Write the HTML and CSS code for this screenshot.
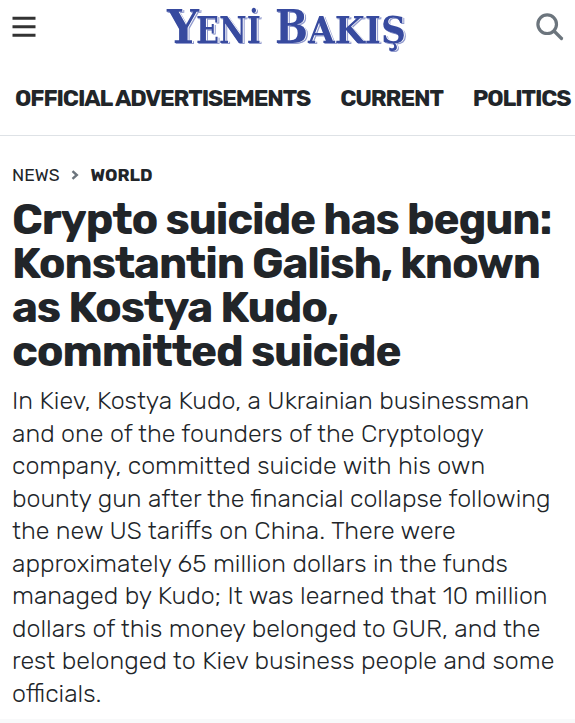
FILE: index.html
```html
<!DOCTYPE html>
<html lang="en">
<head>
    <meta charset="UTF-8">
    <meta name="viewport" content="width=device-width, initial-scale=1.0">
    <title>Yeni Bakış</title>
    <link rel="stylesheet" href="styles.css">
</head>
<body>
    <!-- Header -->
    <header class="header">
        <svg class="icon-menu" viewBox="0 0 24 22" width="24" height="22">
            <path d="M0.5 2.3h23M0.5 10.8h23M0.5 19.3h23" />
        </svg>
        <svg class="logo" viewBox="0 0 246 54" width="246" height="54" role="img" aria-label="Yeni Bakış">
            <text class="logo-big" x="2" y="43" textLength="32" lengthAdjust="spacingAndGlyphs">Y</text>
            <text class="logo-small" x="31" y="43" textLength="65" lengthAdjust="spacingAndGlyphs">ENİ</text>
            <text class="logo-big" x="110" y="43" textLength="33" lengthAdjust="spacingAndGlyphs">B</text>
            <text class="logo-small" x="143" y="43" textLength="98" lengthAdjust="spacingAndGlyphs">AKIŞ</text>
        </svg>
        <svg class="icon-search" viewBox="0 0 28 28" width="28" height="28">
            <circle cx="11.2" cy="11.2" r="9.3" />
            <path d="M18 18l7.5 7.5" />
        </svg>
    </header>

    <!-- Category menu -->
    <nav class="nav">
        <a>OFFICIAL ADVERTISEMENTS</a>
        <a>CURRENT</a>
        <a>POLITICS</a>
    </nav>

    <!-- Article -->
    <main class="article">
        <div class="breadcrumb">
            <span>NEWS</span>
            <svg class="icon-chevron" viewBox="0 0 8 10" width="8" height="10">
                <path d="M1.5 1.2L5.8 5L1.5 8.8" />
            </svg>
            <strong>WORLD</strong>
        </div>
        <h1 class="title">Crypto suicide has begun: Konstantin Galish, known as Kostya Kudo, committed suicide</h1>
        <p class="summary">In Kiev, Kostya Kudo, a Ukrainian businessman and one of the founders of the Cryptology company, committed suicide with his own bounty gun after the financial collapse following the new US tariffs on China. There were approximately 65 million dollars in the funds managed by Kudo; It was learned that 10 million dollars of this money belonged to GUR, and the rest belonged to Kiev business people and some officials.</p>
    </main>
    <div class="divider"></div>
</body>
</html>
```
FILE: styles.css
```css
* {
    box-sizing: border-box;
}

body {
    font-family: Rubik, Roboto, "Liberation Sans", sans-serif;
    color: #212529;
    background-color: #fff;
    margin: 0;
    overflow: hidden;
}

.header {
    display: flex;
    justify-content: space-between;
    height: 54px;
    padding: 0 11px 0 12px;
}

.icon-menu {
    margin-top: 16px;
    stroke: #333;
    stroke-width: 3;
}

.logo {
    margin-left: 3px;
    filter: drop-shadow(1px 0 0 #fff) drop-shadow(1px 1px 0 #929bce);
}

.logo text {
    font-family: "DejaVu Serif", serif;
    font-weight: bold;
    fill: #374a9f;
}

.logo .logo-big {
    font-size: 46px;
}

.logo .logo-small {
    font-size: 38px;
}

.icon-search {
    margin-top: 13px;
    fill: none;
    stroke: #6c757d;
    stroke-width: 3.2;
    stroke-linecap: round;
}

.nav {
    display: flex;
    gap: 30px;
    height: 82px;
    padding: 28px 0 0 15px;
    border-bottom: 1px solid #dee2e6;
    font-size: 23px;
    font-weight: 700;
    line-height: 32px;
    letter-spacing: -1.1px;
    white-space: nowrap;
}

.article {
    height: 583px;
    padding: 28px 12px 0;
}

.breadcrumb {
    display: flex;
    align-items: center;
    height: 22px;
    font-size: 17.5px;
}

.icon-chevron {
    margin: 0 12px 0 11px;
    fill: none;
    stroke: #6c757d;
    stroke-width: 2.4;
}

.title {
    margin: 11px 0 12px;
    font-size: 44px;
    font-weight: 700;
    line-height: 44px;
    letter-spacing: -1.15px;
}

.summary {
    margin: 0;
    font-size: 25px;
    font-weight: 300;
    line-height: 32.5px;
}

.divider {
    height: 4px;
    background-color: #f8f9fa;
}
```
